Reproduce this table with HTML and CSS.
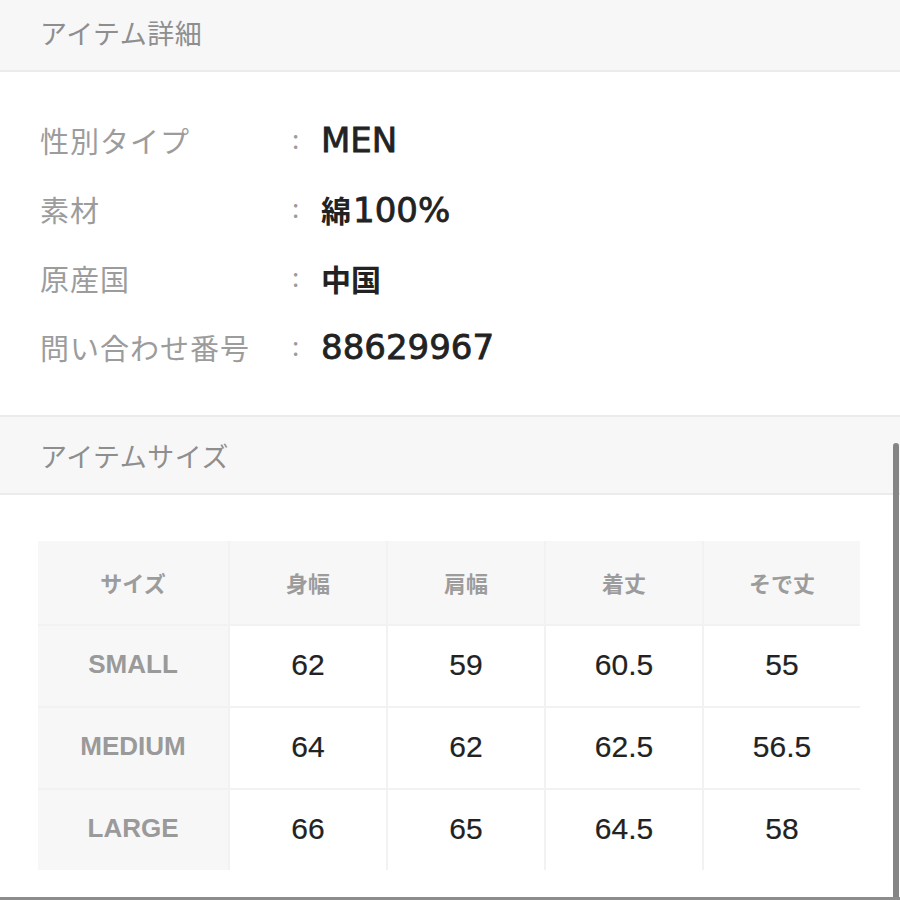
FILE: index.html
```html
<!DOCTYPE html>
<html lang="ja">
<head>
<meta charset="utf-8">
<link rel="stylesheet" href="styles.css">
</head>
<body>
<div class="page">
  <div class="section-head first">アイテム詳細</div>
  <div class="details">
    <div class="row"><div class="label">性別タイプ</div><div class="colon">:</div><div class="value">MEN</div></div>
    <div class="row"><div class="label">素材</div><div class="colon">:</div><div class="value"><span class="cjk">綿</span>100%</div></div>
    <div class="row"><div class="label">原産国</div><div class="colon">:</div><div class="value"><span class="cjk">中国</span></div></div>
    <div class="row"><div class="label">問い合わせ番号</div><div class="colon">:</div><div class="value">88629967</div></div>
  </div>
  <div class="section-head">アイテムサイズ</div>
  <div class="table-wrap">
    <div class="size-table">
      <div class="th">サイズ</div><div class="th">身幅</div><div class="th">肩幅</div><div class="th">着丈</div><div class="th">そで丈</div>
      <div class="rh">SMALL</div><div class="td">62</div><div class="td">59</div><div class="td">60.5</div><div class="td">55</div>
      <div class="rh">MEDIUM</div><div class="td">64</div><div class="td">62</div><div class="td">62.5</div><div class="td">56.5</div>
      <div class="rh">LARGE</div><div class="td">66</div><div class="td">65</div><div class="td">64.5</div><div class="td">58</div>
    </div>
  </div>
  <div class="scrollbar"></div>
</div>
</body>
</html>
```

FILE: styles.css
```css
html, body {
  margin: 0;
  padding: 0;
  background: #ffffff;
}

.page {
  position: relative;
  height: 900px;
  box-sizing: border-box;
  border-bottom: 3px solid #8c8c8c;
  overflow: hidden;
  font-family: "Noto Sans CJK JP", "Liberation Sans", sans-serif;
}

.section-head {
  display: flex;
  align-items: center;
  height: 76px;
  padding-left: 40px;
  background: #f7f7f7;
  border-top: 2px solid #ebebeb;
  border-bottom: 2px solid #ebebeb;
  font-size: 27px;
  color: #8e8e8e;
  letter-spacing: 0.5px;
}

.section-head.first {
  height: 72px;
  border-top: none;
  padding-bottom: 6px;
  box-sizing: border-box;
}

.details {
  display: flex;
  flex-direction: column;
  padding: 33px 0 34px 40px;
}

.row {
  display: flex;
  align-items: center;
  height: 69px;
}

.label {
  width: 252px;
  font-size: 29px;
  color: #9c9c9c;
  letter-spacing: 1px;
}

.colon {
  width: 29px;
  font-size: 26px;
  color: #9c9c9c;
  padding-bottom: 4px;
}

.value {
  font-family: "DejaVu Sans", "Noto Sans CJK JP", sans-serif;
  font-size: 34px;
  color: #222222;
  -webkit-text-stroke: 0.8px #222222;
}

.value .cjk {
  font-family: "Noto Sans CJK JP", sans-serif;
  font-weight: 700;
  font-size: 30px;
  -webkit-text-stroke: 0;
  margin-right: 2px;
}

.table-wrap {
  padding: 46px 40px 0 38px;
}

.size-table {
  display: grid;
  width: 822px;
  grid-template-columns: 190px repeat(4, 1fr);
  grid-template-rows: 83px repeat(3, 80px);
  gap: 2px;
  background: #f2f2f2;
}

.th, .rh, .td {
  display: flex;
  align-items: center;
  justify-content: center;
}

.th {
  background: #f7f7f7;
  font-size: 22px;
  font-weight: 700;
  color: #9c9c9c;
  padding-bottom: 2px;
}

.rh {
  background: #f7f7f7;
  font-family: "Liberation Sans", sans-serif;
  font-size: 26px;
  font-weight: 700;
  color: #9a9a9a;
  padding-bottom: 3px;
}

.td {
  background: #ffffff;
  font-family: "Liberation Sans", sans-serif;
  font-size: 30px;
  color: #222222;
  -webkit-text-stroke: 0.2px #222222;
  padding-bottom: 3px;
}

.scrollbar {
  position: absolute;
  right: 1px;
  top: 443px;
  bottom: 0;
  width: 6px;
  background: #858585;
  border-radius: 3px 3px 0 0;
}
```
